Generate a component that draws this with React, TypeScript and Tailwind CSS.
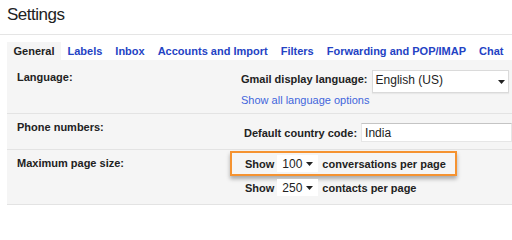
import { ReactNode } from "react";

const tabs = [
  "General",
  "Labels",
  "Inbox",
  "Accounts and Import",
  "Filters",
  "Forwarding and POP/IMAP",
  "Chat",
];

function Caret() {
  return (
    <svg width="7" height="4" viewBox="0 0 7 4" className="shrink-0">
      <path d="M0 0h7L3.5 4z" fill="#222" />
    </svg>
  );
}

function MiniSelect({ value }: { value: string }) {
  return (
    <div className="flex h-[17px] w-[41px] items-center justify-between bg-white pl-[5px] pr-[5px] text-[12px] font-normal">
      <span>{value}</span>
      <Caret />
    </div>
  );
}

function Row({ label, children, className }: { label: string; children: ReactNode; className: string }) {
  return (
    <div className={`flex border-b border-[#e3e3e3] ${className}`}>
      <div className="w-[224px] shrink-0 pl-[10px] font-bold">{label}</div>
      <div className="flex-1">{children}</div>
    </div>
  );
}

export default function App() {
  return (
    <div className="h-[206px] w-[512px] overflow-hidden bg-white text-[11px] leading-[14px] text-[#222] [font-family:'Liberation_Sans',Arial,sans-serif]">
      <div className="h-[35px] border-b border-[#e5e5e5] pl-[7px] pt-[5px] text-[17px] leading-[20px] tracking-[-0.5px]">
        Settings
      </div>

      <div className="mt-[7px] flex h-[18px] pl-[7px]">
        {tabs.map((tab, i) => (
          <div
            key={tab}
            className={`flex items-center px-[6.5px] font-bold ${
              i === 0 ? "bg-[#f5f5f5] text-[#222]" : "text-[#2443c4]"
            }`}
          >
            {tab}
          </div>
        ))}
      </div>

      <div className="ml-[7px] bg-[#f5f5f5]">
        <Row label="Language:" className="h-[54px] pt-[10px]">
          <div className="flex items-start pl-[10px]">
            <span className="mt-[2px] font-bold">Gmail display language:</span>
            <div className="ml-[4px] flex h-[23px] w-[137px] items-center justify-between border border-[#dadada] bg-white pl-[3px] pr-[3px] text-[12px] shadow-[0_1px_1px_rgba(0,0,0,0.05)]">
              <span className="-mt-[4px]">English (US)</span>
              <Caret />
            </div>
          </div>
          <div className="pl-[10px] text-[#4266dc]">Show all language options</div>
        </Row>

        <Row label="Phone numbers:" className="h-[36px] pt-[6px]">
          <div className="mt-[3px] flex items-center pl-[13px]">
            <span className="font-bold">Default country code:</span>
            <div className="ml-[4px] flex h-[19px] flex-1 items-center border border-[#e6e6e6] border-t-[#c4c4c4] bg-white pl-[3px] text-[12px]">
              India
            </div>
          </div>
        </Row>

        <Row label="Maximum page size:" className="h-[55px] pt-[6px]">
          <div className="-ml-[1px] -mt-[5px] flex h-[25px] w-[227px] items-center border-2 border-[#f59331] pl-[13px] font-bold shadow-[0_3px_4px_rgba(0,0,0,0.3)]">
            <span>Show</span>
            <div className="ml-[3px] mr-[4px]">
              <MiniSelect value="100" />
            </div>
            <span>conversations per page</span>
          </div>
          <div className="mt-[3px] flex items-center pl-[14px] font-bold">
            <span>Show</span>
            <div className="ml-[3px] mr-[4px]">
              <MiniSelect value="250" />
            </div>
            <span>contacts per page</span>
          </div>
        </Row>
      </div>
    </div>
  );
}
